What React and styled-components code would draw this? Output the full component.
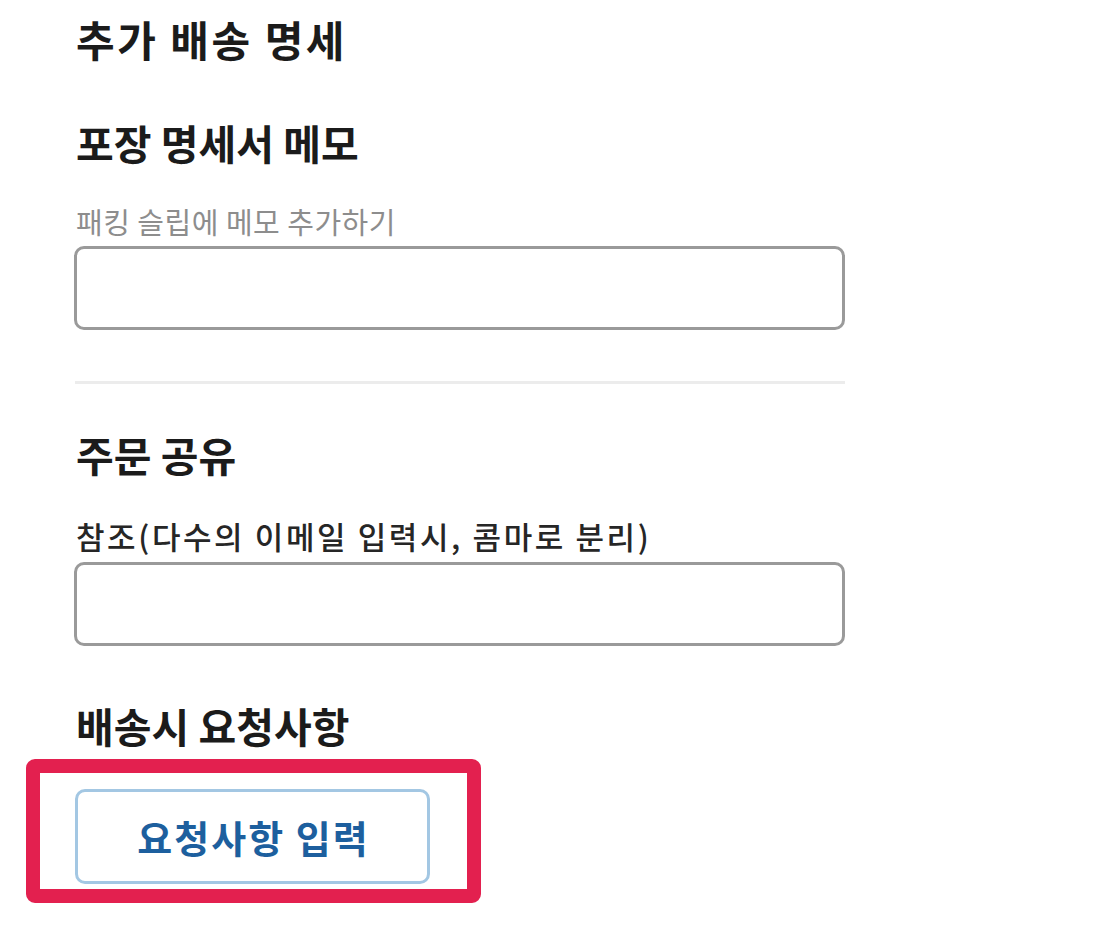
import styled, { createGlobalStyle } from "styled-components";

const GlobalStyle = createGlobalStyle`
  html, body {
    margin: 0;
    padding: 0;
    background: #ffffff;
  }
  body {
    font-family: "Noto Sans CJK KR", "Noto Sans", sans-serif;
    color: #1e1e1e;
  }
`;

// Page column, everything aligned to the same left edge
const Page = styled.div`
  display: flex;
  flex-direction: column;
  align-items: flex-start;
  width: 771px;
  padding: 16px 0 40px 74px;
`;

const Title = styled.h2`
  margin: 0 0 0 2px;
  font-size: 42px;
  line-height: 46px;
  font-weight: 700;
  letter-spacing: 2.5px;
  color: #1b1b1b;
`;

const SectionTitle = styled.h3`
  margin: ${(props) => props.$top}px 0 0 2px;
  font-size: 41px;
  line-height: 46px;
  font-weight: 700;
  letter-spacing: 0;
  color: #1b1b1b;
`;

const Label = styled.label`
  display: block;
  margin: ${(props) => props.$top}px 0 0 2px;
  font-size: ${(props) => (props.$muted ? 29 : 31)}px;
  line-height: 34px;
  letter-spacing: ${(props) => (props.$muted ? 0.5 : 2.6)}px;
  font-weight: ${(props) => (props.$muted ? 400 : 500)};
  color: ${(props) => (props.$muted ? "#8d8d8d" : "#262626")};
`;

const Input = styled.input`
  box-sizing: border-box;
  display: block;
  width: 771px;
  height: 84px;
  margin-top: ${(props) => props.$top}px;
  border: 3px solid #9a9a9a;
  border-radius: 10px;
  background: #fff;
  outline: none;
`;

const Divider = styled.hr`
  width: 770px;
  margin: 51px 0 0 1px;
  border: 0;
  border-top: 3px solid #ececec;
`;

// annotation frame drawn around the button in the screenshot
const Highlight = styled.div`
  margin: 11px 0 0 -48px;
  padding: 16px 37px 5px 35px;
  border: 14px solid #e3204f;
  border-radius: 9px;
`;

const RequestButton = styled.button`
  box-sizing: border-box;
  display: flex;
  align-items: center;
  justify-content: center;
  width: 355px;
  height: 95px;
  padding: 0 0 0 2px;
  border: 3px solid #a3c7e3;
  border-radius: 10px;
  background: #fff;
  font-family: "Noto Sans CJK KR", "Noto Sans", sans-serif;
  font-size: 38px;
  font-weight: 700;
  letter-spacing: 2px;
  color: #1d5f9e;
  cursor: pointer;
`;

export default function App() {
  return (
    <>
      <GlobalStyle />
      <Page>
        <Title>추가 배송 명세</Title>

        <SectionTitle $top={57}>포장 명세서 메모</SectionTitle>
        <Label $top={39} $muted>
          패킹 슬립에 메모 추가하기
        </Label>
        <Input $top={8} />

        <Divider />

        <SectionTitle $top={47}>주문 공유</SectionTitle>
        <Label $top={42}>참조(다수의 이메일 입력시, 콤마로 분리)</Label>
        <Input $top={9} />

        <SectionTitle $top={56}>배송시 요청사항</SectionTitle>
        <Highlight>
          <RequestButton>요청사항 입력</RequestButton>
        </Highlight>
      </Page>
    </>
  );
}
